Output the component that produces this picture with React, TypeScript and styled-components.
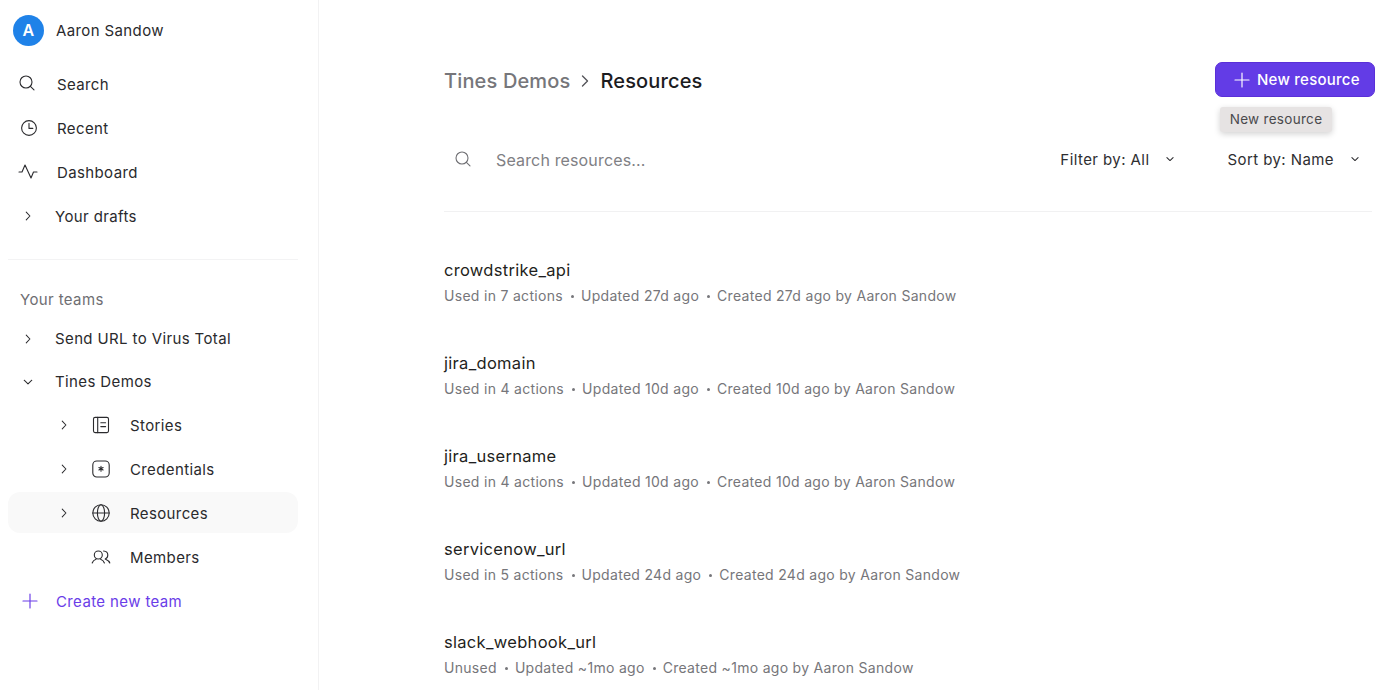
import React, { FC, ReactNode } from "react";
import styled, { createGlobalStyle } from "styled-components";

const GlobalStyle = createGlobalStyle`
  html, body {
    margin: 0;
    height: 100%;
    background: #fff;
    overflow: hidden;
  }
  body {
    font-family: Inter, "Liberation Sans", sans-serif;
    color: #1f1f21;
  }
`;

type IconProps = { size?: number; color?: string; width?: number; children: ReactNode };

const Icon: FC<IconProps> = ({ size = 20, color = "#2b2b2e", width = 1.1, children }) => (
  <svg
    width={size}
    height={size}
    viewBox="0 0 20 20"
    fill="none"
    stroke={color}
    strokeWidth={width}
    strokeLinecap="round"
    strokeLinejoin="round"
  >
    {children}
  </svg>
);

const SearchIcon: FC<{ color?: string }> = ({ color }) => (
  <Icon color={color}>
    <circle cx="8" cy="8" r="6" />
    <path d="M12.4 12.4 16 15.8" />
  </Icon>
);

const ClockIcon = () => (
  <Icon>
    <circle cx="11" cy="10" r="7.4" />
    <path d="M11 5.4V10.4H14.8" />
  </Icon>
);

const PulseIcon = () => (
  <Icon>
    <path d="M1 10H4L7 3 13 16 15.5 10H19" />
  </Icon>
);

const Chevron = () => (
  <Icon size={16} width={1.3}>
    <path d="M7.8 5.2 12.4 10 7.8 14.8" />
  </Icon>
);

const StoriesIcon = () => (
  <Icon>
    <rect x="2.5" y="2.4" width="15" height="15.2" rx="1.6" />
    <path d="M6.7 2.4V17.6M9.8 7.8H14.6M9.8 11.6H14.6" />
  </Icon>
);

const CredentialIcon = () => (
  <Icon>
    <rect x="1.8" y="2" width="16.4" height="16" rx="4" />
    <path d="M10 7.4V12.2M7.9 8.6 12.1 11M12.1 8.6 7.9 11" />
  </Icon>
);

const GlobeIcon = () => (
  <Icon>
    <circle cx="10" cy="10" r="8.2" />
    <ellipse cx="10" cy="10" rx="3.6" ry="8.2" />
    <path d="M1.8 10H18.2" />
  </Icon>
);

const MembersIcon = () => (
  <Icon>
    <circle cx="7.3" cy="8" r="4" />
    <path d="M1.2 16C1.8 14 3.4 12.8 5 12.2M9.6 12.2C11.2 12.8 12.8 14 13.4 16" />
    <path d="M12.6 4C15 4.2 16.8 5.8 16.8 8S15.4 11.6 14.2 12C16 12.8 18.2 14 18.8 16" />
  </Icon>
);

const PlusIcon: FC<{ color: string }> = ({ color }) => (
  <Icon size={18} color={color} width={1.3}>
    <path d="M10 2.2V17.8M2.2 10H17.8" />
  </Icon>
);

const CaretIcon = () => (
  <Icon size={14} width={1.5}>
    <path d="M5.6 8 10 12.2 14.4 8" />
  </Icon>
);

const resources = [
  { name: "crowdstrike_api", meta: ["Used in 7 actions", "Updated 27d ago", "Created 27d ago by Aaron Sandow"] },
  { name: "jira_domain", meta: ["Used in 4 actions", "Updated 10d ago", "Created 10d ago by Aaron Sandow"] },
  { name: "jira_username", meta: ["Used in 4 actions", "Updated 10d ago", "Created 10d ago by Aaron Sandow"] },
  { name: "servicenow_url", meta: ["Used in 5 actions", "Updated 24d ago", "Created 24d ago by Aaron Sandow"] },
  { name: "slack_webhook_url", meta: ["Unused", "Updated ~1mo ago", "Created ~1mo ago by Aaron Sandow"] },
];

const App: FC = () => (
  <Page>
    <GlobalStyle />
    <Sidebar>
      <Profile>
        <Avatar>A</Avatar>
        <span>Aaron Sandow</span>
      </Profile>
      <NavRow>
        <NavIcon>
          <SearchIcon />
        </NavIcon>
        Search
      </NavRow>
      <NavRow>
        <NavIcon>
          <ClockIcon />
        </NavIcon>
        Recent
      </NavRow>
      <NavRow>
        <NavIcon>
          <PulseIcon />
        </NavIcon>
        Dashboard
      </NavRow>
      <ExpandRow>
        <ChevronSlot>
          <Chevron />
        </ChevronSlot>
        Your drafts
      </ExpandRow>
      <Divider />
      <SectionLabel>Your teams</SectionLabel>
      <ExpandRow $tall={false}>
        <ChevronSlot>
          <Chevron />
        </ChevronSlot>
        Send URL to Virus Total
      </ExpandRow>
      <ExpandRow $tall={false}>
        <ChevronSlot $open>
          <Chevron />
        </ChevronSlot>
        Tines Demos
      </ExpandRow>
      <SubRow>
        <SubChevron>
          <Chevron />
        </SubChevron>
        <SubIcon>
          <StoriesIcon />
        </SubIcon>
        Stories
      </SubRow>
      <SubRow>
        <SubChevron>
          <Chevron />
        </SubChevron>
        <SubIcon>
          <CredentialIcon />
        </SubIcon>
        Credentials
      </SubRow>
      <SubRow $active>
        <SubChevron>
          <Chevron />
        </SubChevron>
        <SubIcon>
          <GlobeIcon />
        </SubIcon>
        Resources
      </SubRow>
      <SubRow>
        <SubChevron />
        <SubIcon>
          <MembersIcon />
        </SubIcon>
        Members
      </SubRow>
      <CreateTeam>
        <PlusSlot>
          <PlusIcon color="#6a3de8" />
        </PlusSlot>
        Create new team
      </CreateTeam>
    </Sidebar>
    <Main>
      <Header>
        <Breadcrumb>
          <Crumb>Tines Demos</Crumb>
          <CrumbArrow>
            <Icon size={20} color="#55555a" width={1.4}>
              <path d="M7.5 5 12.5 10 7.5 15" />
            </Icon>
          </CrumbArrow>
          <CurrentCrumb>Resources</CurrentCrumb>
        </Breadcrumb>
        <ButtonWrap>
          <PrimaryButton>
            <PlusIcon color="#ffffff" />
            New resource
          </PrimaryButton>
          <Tooltip>New resource</Tooltip>
        </ButtonWrap>
      </Header>
      <Toolbar>
        <SearchSlot>
          <SearchIcon color="#6f6f73" />
        </SearchSlot>
        <SearchText>Search resources...</SearchText>
        <Dropdown>
          Filter by: All
          <CaretIcon />
        </Dropdown>
        <Dropdown>
          Sort by: Name
          <CaretIcon />
        </Dropdown>
      </Toolbar>
      <List>
        {resources.map((r) => (
          <Item key={r.name}>
            <ItemName>{r.name}</ItemName>
            <ItemMeta>
              {r.meta.map((m) => (
                <MetaPart key={m}>{m}</MetaPart>
              ))}
            </ItemMeta>
          </Item>
        ))}
      </List>
    </Main>
  </Page>
);

const Page = styled.div`
  display: flex;
  width: 1400px;
  height: 690px;
  overflow: hidden;
`;

const Sidebar = styled.aside`
  flex: 0 0 319px;
  box-sizing: border-box;
  border-right: 1px solid #f2f2f3;
  padding: 8px 20px 0 8px;
  font-size: 15px;
  letter-spacing: 0.38px;
  color: #2a2a2d;
`;

const Profile = styled.div`
  display: flex;
  align-items: center;
  gap: 12px;
  height: 44px;
  padding-left: 5px;
  margin-bottom: 10px;
`;

const Avatar = styled.div`
  width: 31px;
  height: 31px;
  border-radius: 50%;
  background: #1f82e8;
  color: #fff;
  font-weight: 600;
  font-size: 16px;
  display: flex;
  align-items: center;
  justify-content: center;
`;

const NavRow = styled.div`
  display: flex;
  align-items: center;
  height: 44px;
  padding-left: 10px;
`;

const NavIcon = styled.span`
  display: flex;
  width: 39px;
`;

const ExpandRow = styled.div<{ $tall?: boolean }>`
  display: flex;
  align-items: center;
  height: ${(p) => (p.$tall === false ? "43px" : "44px")};
  padding-left: 12px;
`;

const ChevronSlot = styled.span<{ $open?: boolean }>`
  display: flex;
  width: 35px;
  svg {
    transform: ${(p) => (p.$open ? "rotate(90deg)" : "none")};
  }
`;

const Divider = styled.div`
  height: 1px;
  background: #f3f3f4;
  margin: 21px 0 0;
`;

const SectionLabel = styled.div`
  display: flex;
  align-items: center;
  box-sizing: border-box;
  height: 37px;
  margin-top: 20px;
  padding: 1px 0 0 12px;
  color: #6e6e72;
`;

const SubRow = styled.div<{ $active?: boolean }>`
  display: flex;
  align-items: center;
  box-sizing: border-box;
  height: 41px;
  margin: 1px 0 3px;
  padding: 1px 0 0 48px;
  border-radius: 12px;
  background: ${(p) => (p.$active ? "#f9f9f9" : "transparent")};
`;

const SubChevron = styled.span`
  display: flex;
  width: 35px;
`;

const SubIcon = styled.span`
  display: flex;
  width: 39px;
`;

const CreateTeam = styled.div`
  display: flex;
  align-items: center;
  height: 42px;
  padding-left: 13px;
  color: #6a3de8;
`;

const PlusSlot = styled.span`
  display: flex;
  width: 35px;
`;

const Main = styled.main`
  flex: 1;
  min-width: 0;
  padding: 62px 25px 0 125px;
`;

const Header = styled.header`
  display: flex;
  justify-content: space-between;
  align-items: flex-start;
  height: 63px;
`;

const Breadcrumb = styled.div`
  display: flex;
  align-items: center;
  gap: 5px;
  height: 38px;
  font-size: 20px;
  font-weight: 500;
  letter-spacing: 0.15px;
`;

const Crumb = styled.span`
  color: #76767a;
`;

const CrumbArrow = styled.span`
  display: flex;
`;

const CurrentCrumb = styled.span`
  color: #1c1c1f;
`;

const ButtonWrap = styled.div`
  position: relative;
`;

const PrimaryButton = styled.button`
  display: flex;
  align-items: center;
  gap: 6px;
  box-sizing: border-box;
  width: 160px;
  height: 35px;
  padding: 0 0 0 17px;
  border: 1px solid #5a2fd8;
  border-radius: 7px;
  background: #633ce6;
  color: #fff;
  font: 500 15px Inter, "Liberation Sans", sans-serif;
  letter-spacing: 0.25px;
`;

const Tooltip = styled.div`
  position: absolute;
  top: 45px;
  left: 5px;
  box-sizing: border-box;
  width: 112px;
  height: 25px;
  padding-bottom: 2px;
  display: flex;
  align-items: center;
  justify-content: center;
  border-radius: 3px;
  background: #e6e3e3;
  color: #4a4a4d;
  font-size: 13.5px;
  letter-spacing: 0.3px;
  box-shadow: 0 2px 6px rgba(0, 0, 0, 0.18);
`;

const Toolbar = styled.div`
  display: flex;
  align-items: center;
  height: 70px;
  border-bottom: 1px solid #f1f1f2;
  margin: 0 3px 32px 0;
  padding-bottom: 16px;
  font-size: 15px;
  letter-spacing: 0.42px;
`;

const SearchSlot = styled.span`
  display: flex;
  width: 52px;
  padding-left: 10px;
  box-sizing: border-box;
`;

const SearchText = styled.span`
  flex: 1;
  color: #808084;
  font-size: 16px;
  letter-spacing: 0.15px;
`;

const Dropdown = styled.span`
  display: flex;
  align-items: center;
  gap: 14px;
  margin: 0 10px 2px 40px;
  color: #2e2e31;
`;

const List = styled.div`
  display: flex;
  flex-direction: column;
`;

const Item = styled.div`
  height: 93px;
  box-sizing: border-box;
  padding-top: 14px;
`;

const ItemName = styled.div`
  font-size: 16.5px;
  line-height: 24px;
  letter-spacing: 0.3px;
  color: #1f1f21;
`;

const ItemMeta = styled.div`
  display: flex;
  align-items: center;
  margin-top: 4px;
  font-size: 14px;
  line-height: 20px;
  letter-spacing: 0.3px;
  color: #76767a;
`;

const MetaPart = styled.span`
  display: flex;
  align-items: center;
  & + &::before {
    content: "";
    width: 3px;
    height: 3px;
    border-radius: 50%;
    margin: 1px 7px 0 8px;
    background: #76767a;
  }
`;

export default App;
